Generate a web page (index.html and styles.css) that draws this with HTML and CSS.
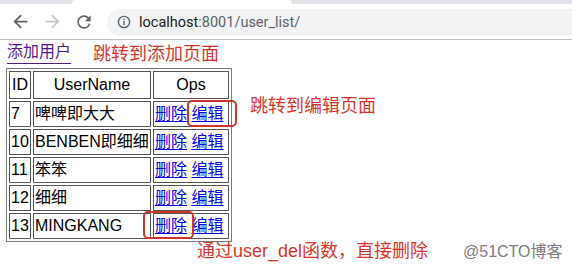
FILE: index.html
```html
<!DOCTYPE html>
<html lang="zh">
<head>
<meta charset="utf-8">
<title>user_list</title>
<link rel="stylesheet" href="styles.css">
</head>
<body>
<header class="chrome">
  <div class="tabstrip">
    <div class="tab-gap-left"></div>
    <div class="tab-active"></div>
    <div class="tab-gap-right"></div>
  </div>
  <div class="toolbar">
    <div class="nav-btn">
      <svg viewBox="0 0 24 24" width="21" height="21"><path fill="#5f6368" d="M20 11H7.83l5.59-5.59L12 4l-8 8 8 8 1.41-1.41L7.83 13H20v-2z"/></svg>
    </div>
    <div class="nav-btn">
      <svg viewBox="0 0 24 24" width="21" height="21"><path fill="#c4c7cb" d="M4 11h12.17l-5.590-5.59L12 4l8 8-8 8-1.41-1.41L16.17 13H4v-2z"/></svg>
    </div>
    <div class="nav-btn">
      <svg viewBox="0 0 24 24" width="20" height="20"><path fill="#5f6368" d="M17.65 6.35A7.958 7.958 0 0012 4c-4.42 0-7.99 3.58-7.99 8s3.57 8 7.99 8c3.73 0 6.84-2.55 7.73-6h-2.08A5.99 5.99 0 0112 18c-3.31 0-6-2.69-6-6s2.69-6 6-6c1.66 0 3.14.69 4.22 1.78L13 11h7V4l-2.35 2.35z"/></svg>
    </div>
    <div class="omnibox">
      <svg class="info" viewBox="0 0 14 14" width="14" height="14"><circle cx="7" cy="7" r="5.6" fill="none" stroke="#5f6368" stroke-width="1.4"/><rect x="6.3" y="6" width="1.4" height="4" fill="#5f6368"/><rect x="6.3" y="3.7" width="1.4" height="1.4" fill="#5f6368"/></svg>
      <span class="host">localhost</span><span class="path">:8001/user_list/</span>
    </div>
  </div>
</header>

<main class="page">
  <div class="add-row"><a class="visited" href="#">添加用户</a></div>
  <table class="users">
    <tr><th class="c-id">ID</th><th class="c-name">UserName</th><th class="c-ops">Ops</th></tr>
    <tr><td>7</td><td>啤啤即大大</td><td><a href="#">删除</a> <a href="#">编辑</a></td></tr>
    <tr><td>10</td><td>BENBEN即细细</td><td><a href="#">删除</a> <a href="#">编辑</a></td></tr>
    <tr><td>11</td><td>笨笨</td><td><a href="#">删除</a> <a href="#">编辑</a></td></tr>
    <tr><td>12</td><td>细细</td><td><a href="#">删除</a> <a href="#">编辑</a></td></tr>
    <tr><td>13</td><td>MINGKANG</td><td><a href="#">删除</a> <a href="#">编辑</a></td></tr>
  </table>
</main>

<div class="note note-add">跳转到添加页面</div>
<div class="note note-edit">跳转到编辑页面</div>
<div class="note note-del">通过user_del函数，直接删除</div>
<div class="mark-box box-edit"></div>
<div class="mark-box box-del"></div>
<div class="watermark">@51CTO博客</div>
</body>
</html>
```

FILE: styles.css
```css
html, body {
  margin: 0;
  padding: 0;
  background: #ffffff;
}
body {
  width: 572px;
  height: 270px;
  overflow: hidden;
  position: relative;
  font-family: "Liberation Sans", "Noto Sans CJK SC", sans-serif;
  color: #000;
}

/* browser chrome */
.chrome {
  border-bottom: 1px solid #bfbfbf;
}
.tabstrip {
  display: flex;
  height: 4px;
  background: #dee1e6;
}
.tab-gap-left { width: 72px; }
.tab-active {
  width: 220px;
  background: #ffffff;
  border-radius: 6px 6px 0 0;
}
.tab-gap-right { flex: 1; }

.toolbar {
  height: 35px;
  display: flex;
  align-items: center;
  padding-left: 10px;
  background: #ffffff;
}
.nav-btn {
  width: 32px;
  height: 24px;
  display: flex;
  align-items: center;
  justify-content: flex-start;
}
.nav-btn svg { display: block; }
.omnibox {
  margin-left: 1px;
  flex: 1;
  height: 27px;
  margin-top: 1px;
  background: #f1f3f4;
  border-radius: 14px 0 0 14px;
  display: flex;
  align-items: center;
  padding-left: 10px;
  font-family: Roboto, "Liberation Sans", sans-serif;
  font-size: 14.5px;
}
.info { display: block; margin-right: 8px; }
.host { color: #202124; }
.path { color: #5f6368; }

/* page */
.page {
  padding: 0 6px;
}
.add-row {
  line-height: 20px;
  height: 20px;
  padding-top: 2px;
  padding-left: 1px;
  font-size: 16px;
}
a { color: #0000ee; text-decoration: underline; }
a.visited { color: #551a8b; text-underline-offset: 6px; }

.users {
  margin-top: 6px;
  border: 1px solid #7a7a7a;
  border-spacing: 2px;
  font-size: 16px;
  line-height: 22px;
}
.users th, .users td {
  border: 1px solid #555;
  padding: 1px;
  white-space: nowrap;
}
.users th { font-weight: normal; text-align: center; padding: 2px 1px; }
.users td { text-align: left; }
.c-id { width: 18px; }
.c-name { width: 114px; }
.c-ops { width: 72px; }
.users td a { text-underline-offset: 2px; }

/* annotations */
.note {
  position: absolute;
  color: #d8362c;
  font-size: 18px;
  line-height: 18px;
  white-space: nowrap;
}
.note-add { left: 93px; top: 45px; }
.note-edit { left: 250px; top: 97px; }
.note-del { left: 197px; top: 242px; }

.mark-box {
  position: absolute;
  border: 2px solid #d0342c;
  border-radius: 5px;
  box-sizing: border-box;
}
.box-edit { left: 187px; top: 100px; width: 50px; height: 27px; }
.box-del { left: 143px; top: 211px; width: 51px; height: 28px; }

.watermark {
  position: absolute;
  left: 463px;
  top: 244px;
  font-size: 16px;
  line-height: 16px;
  color: #7d7d7d;
  text-shadow: 0 0 2px #fff;
  white-space: nowrap;
}
```
